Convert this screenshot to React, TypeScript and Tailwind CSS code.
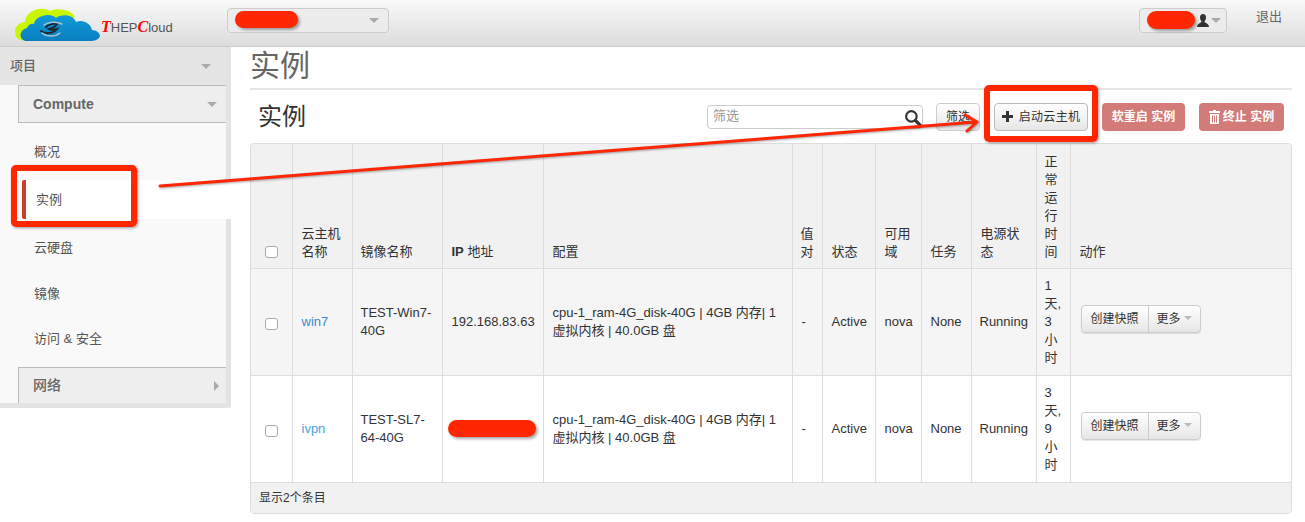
import React from "react";

const FONT = { fontFamily: '"Liberation Sans","Noto Sans CJK SC",sans-serif' };
const SERIF = { fontFamily: '"Liberation Serif",serif' };

function Blob({ className }: { className: string }) {
  return <span className={`absolute bg-[#ff2600] rounded-[10px] shadow-[2px_2px_3px_rgba(0,0,0,0.35)] ${className}`} />;
}

function Caret({ className = "" }: { className?: string }) {
  return <span className={`inline-block w-0 h-0 border-x-[5px] border-x-transparent border-t-[5px] border-t-[#aaa] ${className}`} />;
}

function Th({ children, w, className = "text-left pl-[9px] pr-[7px]" }: { children?: React.ReactNode; w: number; className?: string }) {
  return (
    <th style={{ width: w }} className={`border-l border-[#ddd] first:border-l-0 align-bottom font-normal pb-[7px] text-[#333] leading-[18px] ${className}`}>
      {children}
    </th>
  );
}

function Td({ children, className = "pl-[9px] pr-[7px]" }: { children?: React.ReactNode; className?: string }) {
  return <td className={`border-l border-t border-[#ddd] first:border-l-0 align-middle text-[#333] leading-[18px] ${className}`}>{children}</td>;
}

function Row({ name, image, ip, up, bg, link }: { name: string; image: string; ip?: string; up: string[]; bg: string; link: string }) {
  return (
    <tr className={`${bg} h-[107px]`}>
      <Td className="text-center"><span className="inline-block w-[13px] h-[12px] mt-1 bg-white border border-[#aaa] rounded-[3px] align-middle" /></Td>
      <Td><span className={link}>{name}</span></Td>
      <Td className="px-2">{image}</Td>
      <Td>{ip}</Td>
      <Td>cpu-1_ram-4G_disk-40G | 4GB 内存| 1 虚拟内核 | 40.0GB 盘</Td>
      <Td>-</Td>
      <Td>Active</Td>
      <Td>nova</Td>
      <Td>None</Td>
      <Td className="px-2">Running</Td>
      <Td className="px-2">{up.map((u, i) => <div key={i}>{u}</div>)}</Td>
      <Td className="pl-[10px]">
        <div className="inline-flex h-[28px] -mt-[5px] align-top text-[12px] text-[#333] border border-[#ccc] rounded-[4px] bg-gradient-to-b from-white to-[#e6e6e6] shadow-[0_1px_1px_rgba(0,0,0,0.1)]">
          <span className="flex items-center justify-center w-[67px] border-r border-[#ccc]">创建快照</span>
          <span className="flex items-center w-[51px] pl-[8px] gap-[3px]">更多<span className="inline-block w-0 h-0 -mt-[2px] border-x-[4px] border-x-transparent border-t-[4px] border-t-[#bbb]" /></span>
        </div>
      </Td>
    </tr>
  );
}

function SideLink({ children, active, className = "" }: { children: React.ReactNode; active?: boolean; className?: string }) {
  return (
    <div className={`flex items-center text-[13px] text-[#555] ${active ? "h-[39px] mt-[6px] mb-[5px] bg-white mr-[-5px] pl-[10px] ml-[22px] border-l-[4px] border-[#d23c27] rounded-l-[2px]" : "h-[46px] pl-[34px]"} ${className}`}>
      {children}
    </div>
  );
}

export default function App() {
  return (
    <div style={FONT} className="relative w-[1305px] h-[522px] overflow-hidden bg-white text-[13px]">
      {/* Header */}
      <header className="relative h-[47px] flex items-center border-b border-[#ccc] bg-gradient-to-b from-[#f9f9f9] to-[#dcdcdc]">
        <div className="relative w-[227px] h-[46px] shrink-0">
          <svg width="104" height="46" viewBox="0 0 104 46" className="absolute left-0 top-0">
            <defs>
              <linearGradient id="cloudBlue" x1="0" y1="0" x2="0" y2="1">
                <stop offset="0" stopColor="#0f9ada" />
                <stop offset="1" stopColor="#0a7ebf" />
              </linearGradient>
            </defs>
            <path d="M17 38C13 32 15 23 25 22C25 12 40 5 50 11C58 7 72 10 75 17L60 25L30 41Q20 41 17 38Z" fill="#c8f700" />
            <path d="M27 41C19 41 18 30 27 28C28 25 31 23 34 24C35 16 50 12 56 18C62 13 74 15 76 22C83 19 91 24 92 30C96 30 100 33 100 36C99 40 94 41 90 41Z" fill="url(#cloudBlue)" />
            <path d="M41 31C45 34 53 34 57 29C54 30 51 30 49 29C53 28 56 26 57 24C53 23 48 25 46 27" fill="none" stroke="#1c2a33" strokeWidth="2" strokeLinecap="round" />
            <path d="M44 25C48 22 56 21 62 24M42 33C47 37 55 37 60 33" fill="none" stroke="#a9c3cf" strokeWidth="1.5" strokeLinecap="round" />
          </svg>
          <div className="absolute left-[101px] top-[18px] text-[13px] leading-[18px] text-[#555] whitespace-nowrap">
            <span style={SERIF} className="text-[#f00] italic font-bold text-[16px]">T</span>HEP<span style={SERIF} className="text-[#f00] italic font-bold text-[16px]">C</span>loud
          </div>
        </div>
        <div className="relative w-[162px] h-[25px] -mt-[6px] border border-[#ccc] rounded-[4px] bg-[#ececec]">
          <Blob className="left-[7px] top-[2px] w-[63px] h-[17px]" />
          <Caret className="absolute right-[9px] top-[9px]" />
        </div>
        <div className="ml-auto flex items-start -mt-[6px]">
          <div className="relative w-[88px] h-[25px] border border-[#ccc] rounded-[4px] bg-[#ececec] flex items-center justify-end pr-[5px] gap-[1px]">
            <Blob className="left-[7px] top-[2px] w-[48px] h-[18px]" />
            <svg width="12" height="13" viewBox="0 0 12 13"><path d="M6 0c2 0 3 1.500 3 3.500S8 6.500 7.500 7.500 12 9.500 12 13H0c0-3.500 5-4.500 4.500-5.500S3 5.500 3 3.500 4 0 6 0z" fill="#333" /></svg>
            <Caret className="ml-[1px]" />
          </div>
          <div className="w-[78px] pl-[29px] -mt-[1px] text-[13px] text-[#666]">退出</div>
        </div>
      </header>

      <div className="flex items-start">
        {/* Sidebar */}
        <aside className="w-[231px] shrink-0 h-[361px] bg-[#f9f9f9] border-r-[5px] border-b-[5px] border-[#e3e3e3] rounded-br-[3px]">
          <div className="h-[38px] bg-[#e5e5e5] flex items-center justify-between pl-[10px] pr-[15px] font-medium text-[13px] text-[#666]">
            项目<Caret />
          </div>
          <div className="ml-[18px] h-[38px] bg-[#eeeeee] border border-r-0 border-[#bbb] flex items-center justify-between pl-[14px] pr-[9px] text-[14px] font-bold text-[#666]">
            Compute<Caret />
          </div>
          <div className="h-[5px]" />
          <SideLink className="pt-[1px]">概况</SideLink>
          <SideLink active>实例</SideLink>
          <SideLink className="pt-[1px]">云硬盘</SideLink>
          <SideLink className="pt-[1px]">镜像</SideLink>
          <SideLink>访问 &amp; 安全</SideLink>
          <div className="mt-[5px] ml-[18px] h-[36px] bg-[#eeeeee] border border-r-0 border-b-0 border-[#bbb] flex items-center justify-between pl-[14px] pr-[7px] text-[14px] font-medium text-[#666]">
            网络<span className="w-0 h-0 border-y-[5px] border-y-transparent border-l-[5px] border-l-[#aaa]" />
          </div>
        </aside>

        {/* Main */}
        <main className="ml-[19px] w-[1042px]">
          <h1 className="h-[43px] pt-[2px] text-[30px] leading-[34px] font-normal text-[#666] border-b-2 border-[#e5e5e5]">实例</h1>
          <div className="h-[53px] flex items-center">
            <h2 className="ml-[8px] text-[24px] text-[#333] font-normal">实例</h2>
            <div className="ml-auto flex items-center mr-[8px]">
              <div className="relative w-[216px] h-[24px] bg-white border border-[#ccc] rounded-[4px] pl-[5px] text-[13px] leading-[20px] text-[#999]">
                筛选
                <svg width="19" height="19" viewBox="0 0 18 18" className="absolute right-[-1px] top-[3px]">
                  <circle cx="7" cy="7" r="5" fill="none" stroke="#333" strokeWidth="2" />
                  <path d="M11 11L16 16" stroke="#333" strokeWidth="3" strokeLinecap="round" />
                </svg>
              </div>
              <button className="ml-[13px] w-[44px] h-[28px] text-[12px] text-[#333] border border-[#ccc] rounded-[4px] bg-gradient-to-b from-white to-[#e6e6e6]">筛选</button>
              <button className="ml-[14px] w-[94px] h-[28px] flex items-center justify-center gap-[6px] text-[12px] tracking-[0.3px] text-[#333] border border-[#bbb] rounded-[4px] bg-gradient-to-b from-white to-[#e6e6e6]">
                <svg width="11" height="11" viewBox="0 0 11 11"><path d="M4 0h3v4h4v3H7v4H4V7H0V4h4z" fill="#333" /></svg>
                启动云主机
              </button>
              <button className="ml-[14px] w-[83px] h-[28px] rounded-[4px] bg-[#d27b78] text-white font-bold text-[12px]">软重启 实例</button>
              <button className="ml-[14px] w-[85px] h-[28px] flex items-center justify-center gap-[3px] rounded-[4px] bg-[#d27b78] text-white font-bold text-[12px]">
                <svg width="11" height="14" viewBox="0 0 11 14" fill="#fff">
                  <path d="M4 0h3v1h4v2H0V1h4z" />
                  <path d="M1 4h9v10H1zM3 5.500v7h1v-7zM5 5.500v7h1v-7zM7 5.500v7h1v-7z" fillRule="evenodd" />
                </svg>
                终止 实例
              </button>
            </div>
          </div>
          <div className="w-[1042px] border border-[#ddd] rounded-[4px] overflow-hidden">
            <table className="w-full table-fixed border-collapse text-[13px]">
              <thead>
                <tr className="bg-[#f1f1f1] h-[124px]">
                  <Th w={41} className="text-center"><span className="inline-block w-[13px] h-[12px] bg-white border border-[#aaa] rounded-[3px] align-middle" /></Th>
                  <Th w={60}>云主机名称</Th>
                  <Th w={90} className="text-left px-2">镜像名称</Th>
                  <Th w={101}><b>IP</b> 地址</Th>
                  <Th w={249}>配置</Th>
                  <Th w={30} className="text-left px-2">值对</Th>
                  <Th w={53}>状态</Th>
                  <Th w={46}>可用域</Th>
                  <Th w={50}>任务</Th>
                  <Th w={65}>电源状态</Th>
                  <Th w={34} className="text-left px-2">正常运行时间</Th>
                  <Th w={223}>动作</Th>
                </tr>
              </thead>
              <tbody>
                <Row name="win7" image="TEST-Win7-40G" ip="192.168.83.63" up={["1", "天,", "3", "小", "时"]} bg="bg-[#f5f5f5]" link="text-[#428bca]" />
                <Row name="ivpn" image="TEST-SL7-64-40G" up={["3", "天,", "9", "小", "时"]} bg="bg-white" link="text-[#4aa3df]" />
              </tbody>
            </table>
            <div className="h-[31px] bg-[#f1f1f1] border-t border-[#ddd] flex items-center pl-[8px] text-[12px] text-[#333]">显示2个条目</div>
          </div>
        </main>
      </div>

      {/* Annotations */}
      <Blob className="left-[448px] top-[420px] w-[88px] h-[17px]" />
      <span className="absolute left-[11px] top-[165px] w-[126px] h-[62px] border-[6px] border-[#ff2600] rounded-[5px] shadow-[1px_1px_3px_rgba(0,0,0,0.4)]" />
      <span className="absolute left-[984px] top-[85px] w-[114px] h-[57px] border-[6px] border-[#ff2600] rounded-[5px] shadow-[1px_1px_3px_rgba(0,0,0,0.4)]" />
      <svg width="1305" height="522" className="absolute left-0 top-0 pointer-events-none drop-shadow-[1px_1px_1px_rgba(0,0,0,0.35)]">
        <path d="M160 186 L976 122 M965 115 L977 122 L967 131" fill="none" stroke="#ff2600" strokeWidth="3" strokeLinecap="round" strokeLinejoin="round" />
      </svg>
    </div>
  );
}
